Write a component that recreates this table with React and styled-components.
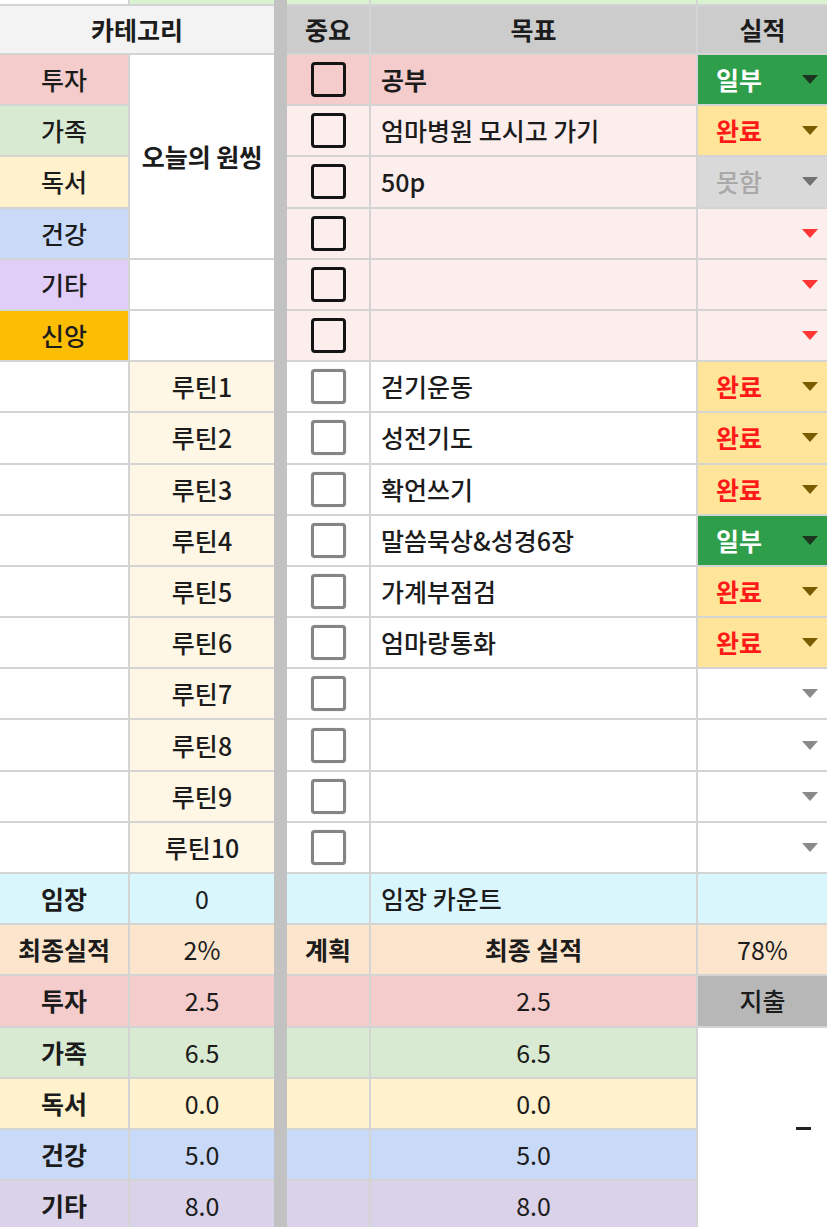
import React from 'react';
import styled, { createGlobalStyle } from 'styled-components';

const Global = createGlobalStyle`
  html, body { margin: 0; padding: 0; overflow: hidden; background: #fff; }
  body { font-family: "Noto Sans CJK KR", "Noto Sans", sans-serif; }
`;

const Sheet = styled.div`
  display: grid;
  grid-template-columns: 128px 144px 9px 82px 325px 129px;
  grid-template-rows: 4px 47px repeat(23, 49.2px);
  gap: 2px;
  width: 827px;
  background: #d4d4d4;
  font-family: "Noto Sans CJK KR", "Noto Sans", sans-serif;
  font-size: 25px;
  color: #1c1c1c;
`;

const Gutter = styled.div`
  grid-column: 3;
  grid-row: 1 / -1;
  margin: 0 -2px;
  background: #c2c2c2;
`;

const Strip = styled.div`
  background: ${(p) => p.$bg};
`;

const Cell = styled.div`
  display: flex;
  align-items: center;
  justify-content: ${(p) =>
    p.$align === 'left' ? 'flex-start' : p.$align === 'right' ? 'flex-end' : 'center'};
  padding: ${(p) => (p.$align === 'left' ? '0 10px' : p.$align === 'right' ? '0 16px' : '0')};
  background: ${(p) => p.$bg || '#fff'};
  font-weight: ${(p) => (p.$bold ? 700 : p.$num ? 400 : 500)};
  color: ${(p) => p.$color || '#1c1c1c'};
  grid-column: ${(p) => (p.$cols ? `span ${p.$cols}` : 'auto')};
  grid-row: ${(p) => (p.$rows ? `span ${p.$rows}` : 'auto')};
  white-space: nowrap;
  overflow: hidden;
  line-height: 1;
`;

const Dash = styled.span`
  display: block;
  width: 15px;
  height: 3px;
  background: #222;
`;

const Box = styled.span`
  width: 35px;
  height: 35px;
  box-sizing: border-box;
  border: 3px solid ${(p) => (p.$strong ? '#141414' : '#858585')};
  border-radius: 4px;
  background: ${(p) => (p.$strong ? 'transparent' : '#fff')};
  box-shadow: ${(p) => (p.$strong ? 'none' : '0 0 1px #999')};
`;

const StatusCell = styled.div`
  display: flex;
  align-items: center;
  padding: 0 9px 0 18px;
  background: ${(p) => p.$bg};
  line-height: 1;
`;

const StatusText = styled.span`
  font-weight: ${(p) => (p.$bold ? 700 : 500)};
  color: ${(p) => p.$color};
`;

const Caret = styled.span`
  margin-left: auto;
  width: 0;
  height: 0;
  border-left: 8px solid transparent;
  border-right: 8px solid transparent;
  border-top: 9px solid ${(p) => p.$color};
`;

const STATUS = {
  partial: { bg: '#2f9e4a', text: '일부', color: '#ffffff', bold: true, caret: '#1b3520' },
  done: { bg: '#ffe599', text: '완료', color: '#ff1a1a', bold: true, caret: '#7a5c00' },
  fail: { bg: '#d9d9d9', text: '못함', color: '#a9a9a9', bold: false, caret: '#727272' },
  emptyPink: { bg: '#fdeeee', text: '', caret: '#ff3636' },
  emptyWhite: { bg: '#ffffff', text: '', caret: '#8a8a8a' },
};

function Status({ kind }) {
  const s = STATUS[kind];
  return (
    <StatusCell $bg={s.bg}>
      {s.text && (
        <StatusText $color={s.color} $bold={s.bold}>
          {s.text}
        </StatusText>
      )}
      <Caret $color={s.caret} />
    </StatusCell>
  );
}

const categories = [
  { label: '투자', bg: '#f4cccc', goal: '공부', bold: true, rowBg: '#f4cccc', status: 'partial' },
  { label: '가족', bg: '#d9ead3', goal: '엄마병원 모시고 가기', rowBg: '#fdeeee', status: 'done' },
  { label: '독서', bg: '#fff2cc', goal: '50p', rowBg: '#fdeeee', status: 'fail' },
  { label: '건강', bg: '#c9daf8', goal: '', rowBg: '#fdeeee', status: 'emptyPink' },
  { label: '기타', bg: '#e0cdf8', goal: '', rowBg: '#fdeeee', status: 'emptyPink' },
  { label: '신앙', bg: '#fcbd05', goal: '', rowBg: '#fdeeee', status: 'emptyPink' },
];

const routines = [
  { goal: '걷기운동', status: 'done' },
  { goal: '성전기도', status: 'done' },
  { goal: '확언쓰기', status: 'done' },
  { goal: '말씀묵상&성경6장', status: 'partial' },
  { goal: '가계부점검', status: 'done' },
  { goal: '엄마랑통화', status: 'done' },
  { goal: '', status: 'emptyWhite' },
  { goal: '', status: 'emptyWhite' },
  { goal: '', status: 'emptyWhite' },
  { goal: '', status: 'emptyWhite' },
];

const summary = [
  { label: '투자', bg: '#f4cccc', value: '2.5' },
  { label: '가족', bg: '#d9ead3', value: '6.5' },
  { label: '독서', bg: '#fff2cc', value: '0.0' },
  { label: '건강', bg: '#c9daf8', value: '5.0' },
  { label: '기타', bg: '#d9d2e9', value: '8.0' },
];

const GREEN = '#d9f2d0';
const CYAN = '#d9f6fd';
const PEACH = '#fce5cd';
const CREAM = '#fef7e6';

export default function App() {
  return (
    <>
      <Global />
      <Sheet>
        <Gutter />

        <Strip $bg="#ffffff" />
        <Strip $bg={GREEN} />
        <Strip $bg={GREEN} />
        <Strip $bg={GREEN} />
        <Strip $bg={GREEN} />

        <Cell $cols={2} $bg="#f3f3f3" $bold>카테고리</Cell>
        <Cell $bg="#cccccc" $bold>중요</Cell>
        <Cell $bg="#cccccc" $bold>목표</Cell>
        <Cell $bg="#cccccc" $bold>실적</Cell>

        {categories.map((c, i) => (
          <React.Fragment key={c.label}>
            <Cell $bg={c.bg}>{c.label}</Cell>
            {i === 0 && (
              <Cell $rows={4} $bold>
                오늘의 원씽
              </Cell>
            )}
            {i >= 4 && <Cell />}
            <Cell $bg={c.rowBg}>
              <Box $strong />
            </Cell>
            <Cell $bg={c.rowBg} $align="left" $bold={c.bold}>
              {c.goal}
            </Cell>
            <Status kind={c.status} />
          </React.Fragment>
        ))}

        {routines.map((r, i) => (
          <React.Fragment key={`r${i}`}>
            <Cell />
            <Cell $bg={CREAM}>루틴{i + 1}</Cell>
            <Cell>
              <Box />
            </Cell>
            <Cell $align="left">{r.goal}</Cell>
            <Status kind={r.status} />
          </React.Fragment>
        ))}

        <Cell $bg={CYAN} $bold>임장</Cell>
        <Cell $bg={CYAN} $num>0</Cell>
        <Cell $bg={CYAN} />
        <Cell $bg={CYAN} $align="left">임장 카운트</Cell>
        <Cell $bg={CYAN} />

        <Cell $bg={PEACH} $bold>최종실적</Cell>
        <Cell $bg={PEACH} $num>2%</Cell>
        <Cell $bg={PEACH} $bold>계획</Cell>
        <Cell $bg={PEACH} $bold>최종 실적</Cell>
        <Cell $bg={PEACH} $num>78%</Cell>

        {summary.map((s, i) => (
          <React.Fragment key={`s${s.label}`}>
            <Cell $bg={s.bg} $bold>{s.label}</Cell>
            <Cell $bg={s.bg} $num>{s.value}</Cell>
            <Cell $bg={s.bg} />
            <Cell $bg={s.bg} $num>{s.value}</Cell>
            {i === 0 && <Cell $bg="#b7b7b7">지출</Cell>}
            {i === 1 && (
              <Cell $rows={4} $align="right" aria-label="–">
                <Dash />
              </Cell>
            )}
          </React.Fragment>
        ))}
      </Sheet>
    </>
  );
}
